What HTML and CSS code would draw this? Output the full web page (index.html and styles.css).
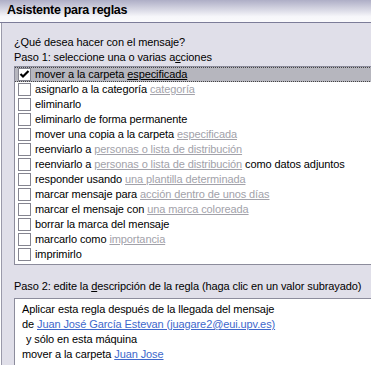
FILE: index.html
```html
<!DOCTYPE html>
<html lang="es">
    <head>
        <meta charset="UTF-8">
        <title>Asistente para reglas</title>
        <link rel="stylesheet" href="styles.css">
    </head>
    <body>
        <div class="dialog">
            <header class="titlebar">Asistente para reglas</header>
            <div class="content">
                <p class="line">¿Qué desea hacer con el mensaje?</p>
                <p class="line">Paso 1: seleccione una o varias a<u>c</u>ciones</p>
                <ul class="actions">
                    <li class="selected"><span class="box"><svg width="11" height="11" viewBox="0 0 11 11"><path d="M1.5 5 L4 7.5 L9.5 2" fill="none" stroke="#000" stroke-width="2.2"/></svg></span>mover a la carpeta <u>especificada</u></li>
                    <li><span class="box"></span>asignarlo a la categoría <a>categoría</a></li>
                    <li><span class="box"></span>eliminarlo</li>
                    <li><span class="box"></span>eliminarlo de forma permanente</li>
                    <li><span class="box"></span>mover una copia a la carpeta <a>especificada</a></li>
                    <li><span class="box"></span>reenviarlo a <a>personas o lista de distribución</a></li>
                    <li><span class="box"></span>reenviarlo a <a>personas o lista de distribución</a> como datos adjuntos</li>
                    <li><span class="box"></span>responder usando <a>una plantilla determinada</a></li>
                    <li><span class="box"></span>marcar mensaje para <a>acción dentro de unos días</a></li>
                    <li><span class="box"></span>marcar el mensaje con <a>una marca coloreada</a></li>
                    <li><span class="box"></span>borrar la marca del mensaje</li>
                    <li><span class="box"></span>marcarlo como <a>importancia</a></li>
                    <li><span class="box"></span>imprimirlo</li>
                </ul>
                <p class="line step2">Paso 2: edite la <u>d</u>escripción de la regla (haga clic en un valor subrayado)</p>
                <div class="desc">
                    <p>Aplicar esta regla después de la llegada del mensaje</p>
                    <p>de <a>Juan José García Estevan (juagare2@eui.upv.es)</a></p>
                    <p class="indent">y sólo en esta máquina</p>
                    <p>mover a la carpeta <a>Juan Jose</a></p>
                </div>
            </div>
        </div>
    </body>
</html>
```

FILE: styles.css
```css
*{
    margin: 0;
    padding: 0;
    box-sizing: border-box;
}
body{
    width: 371px;
    height: 365px;
    overflow: hidden;
    font-family: "Liberation Sans", Arial, sans-serif;
    font-size: 11px;
    letter-spacing: -0.1px;
    color: #000;
    background: #e0dfe9;
}
.dialog{
    height: 365px;
    overflow: hidden;
}
.titlebar{
    height: 23px;
    padding: 3px 0 0 7px;
    font-size: 12.5px;
    font-weight: bold;
    letter-spacing: -0.3px;
    background: linear-gradient(#aeaec6, #f6f6fa 75%, #fafafc);
    border-bottom: 1px solid #7c7c98;
}
.content{
    min-height: 342px;
    padding: 12px 0 0 13px;
    border-left: 1px solid #fff;
    box-shadow: inset 1px 0 0 #9a9aaa;
}
.line{
    height: 15px;
    line-height: 15px;
    white-space: nowrap;
}
.actions{
    list-style: none;
    margin-top: 1px;
    width: 380px;
    height: 199px;
    padding-bottom: 3px;
    background: #fff;
    border: 1px solid #8c8c9c;
    border-right: none;
}
.actions li{
    height: 15px;
    line-height: 13px;
    padding: 1px 0 0 3px;
    white-space: nowrap;
}
.actions li.selected{
    background: #b6b6be;
    border-top: 1px dotted #444;
    border-bottom: 1px dotted #444;
    padding-top: 0;
}
.box{
    display: inline-block;
    vertical-align: top;
    width: 13px;
    height: 13px;
    margin-right: 4px;
    background: #fff;
    border: 1px solid #858590;
}
.box svg{
    display: block;
}
.actions a{
    color: #a2a2aa;
    text-decoration: underline;
}
.step2{
    margin-top: 14px;
}
.desc{
    margin-top: 4px;
    width: 380px;
    height: 80px;
    padding: 3px 0 0 7px;
    background: #fff;
    border: 1px solid #8c8c9c;
    border-right: none;
}
.desc p{
    height: 15px;
    line-height: 15px;
    white-space: nowrap;
}
.desc .indent{
    padding-left: 4px;
}
.desc a{
    color: #3e68cc;
    text-decoration: underline;
}
```
